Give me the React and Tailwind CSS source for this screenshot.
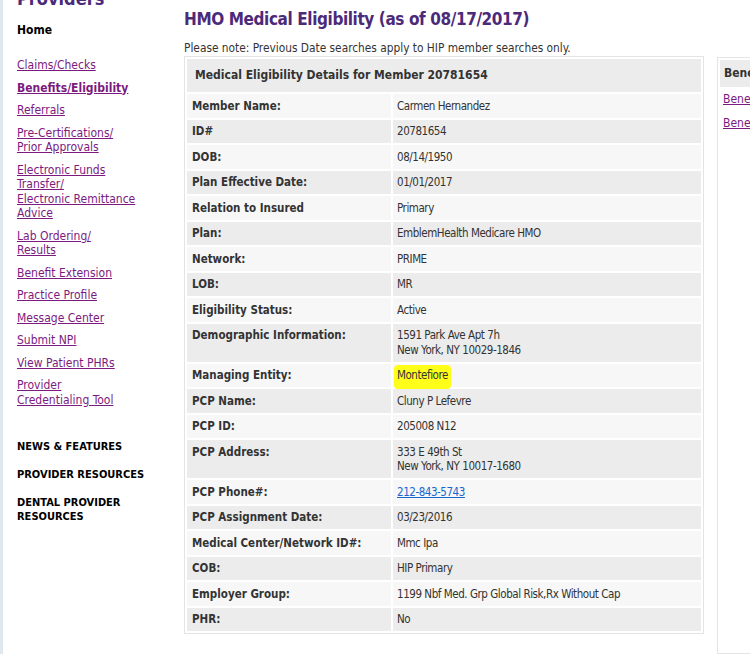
import React from 'react';

const rows = [
  ['Member Name:', ['Carmen Hernandez']],
  ['ID#', ['20781654']],
  ['DOB:', ['08/14/1950']],
  ['Plan Effective Date:', ['01/01/2017']],
  ['Relation to Insured', ['Primary']],
  ['Plan:', ['EmblemHealth Medicare HMO']],
  ['Network:', ['PRIME']],
  ['LOB:', ['MR']],
  ['Eligibility Status:', ['Active']],
  ['Demographic Information:', ['1591 Park Ave Apt 7h', 'New York, NY 10029-1846']],
  ['Managing Entity:', ['Montefiore'], 'highlight'],
  ['PCP Name:', ['Cluny P Lefevre']],
  ['PCP ID:', ['205008 N12']],
  ['PCP Address:', ['333 E 49th St', 'New York, NY 10017-1680']],
  ['PCP Phone#:', ['212-843-5743'], 'phone'],
  ['PCP Assignment Date:', ['03/23/2016']],
  ['Medical Center/Network ID#:', ['Mmc Ipa']],
  ['COB:', ['HIP Primary']],
  ['Employer Group:', ['1199 Nbf Med. Grp Global Risk,Rx Without Cap']],
  ['PHR:', ['No']],
];

const navLinks = [
  ['Claims/Checks'],
  ['Benefits/Eligibility', true],
  ['Referrals'],
  ['Pre-Certifications/\nPrior Approvals'],
  ['Electronic Funds\nTransfer/\nElectronic Remittance\nAdvice'],
  ['Lab Ordering/\nResults'],
  ['Benefit Extension'],
  ['Practice Profile'],
  ['Message Center'],
  ['Submit NPI'],
  ['View Patient PHRs'],
  ['Provider\nCredentialing Tool'],
];

const font = "font-['DejaVu_Sans_Condensed','Liberation_Sans',sans-serif]";

function Sidebar() {
  return (
    <div className="w-[181px] shrink-0 pl-[14px] pt-0">
      <div className="-mt-[12px] text-[18px] font-bold leading-[22px] text-[#4b2a7a]">Providers</div>
      <div className="mt-[13px] text-[12px] font-bold leading-[14px] text-black">Home</div>
      <ul className="mt-[21px] flex flex-col gap-[8px] text-[12px] leading-[14.5px]">
        {navLinks.map(([label, bold]) => (
          <li key={label}>
            <a href="#" className={`whitespace-pre-line text-[#7b1a7f] underline ${bold ? 'font-bold' : ''}`}>
              {label}
            </a>
          </li>
        ))}
      </ul>
      <div className="mt-[33px] flex flex-col gap-[14px] text-[11px] font-bold leading-[14px] text-black">
        <div>NEWS &amp; FEATURES</div>
        <div>PROVIDER RESOURCES</div>
        <div>
          DENTAL PROVIDER
          <br />
          RESOURCES
        </div>
      </div>
    </div>
  );
}

function DetailsTable() {
  return (
    <table className="w-[520px] border-separate border-spacing-[2px] border border-[#e4e4e4] bg-white text-[#333]">
      <thead>
        <tr>
          <th colSpan={2} className="bg-[#ececec] px-[8px] py-[9px] text-left text-[12px] font-bold leading-[15px]">
            Medical Eligibility Details for Member 20781654
          </th>
        </tr>
      </thead>
      <tbody>
        {rows.map(([label, value, kind], i) => (
          <tr key={label} className={i % 2 === 0 ? 'bg-[#f7f7f7]' : 'bg-[#ececec]'}>
            <td className="w-[204px] px-[5px] py-[4.5px] align-top text-[11.5px] font-bold leading-[14.5px]">{label}</td>
            <td className="px-[4px] py-[4.5px] align-top text-[11.5px] leading-[14.5px] tracking-[-0.45px]">
              {kind === 'phone' ? (
                <a href="#" className="text-[#1a66cc] underline">{value[0]}</a>
              ) : kind === 'highlight' ? (
                <span className="-mx-[3px] rounded-[4px] bg-[#ffff1a] px-[3px] pt-[3px] pb-[7px]">{value[0]}</span>
              ) : (
                value.map((line) => <div key={line}>{line}</div>)
              )}
            </td>
          </tr>
        ))}
      </tbody>
    </table>
  );
}

function SidePanel() {
  return (
    <div className="mt-[57px] w-[120px] shrink-0 border border-[#e4e4e4] bg-white pb-[10px]">
      <div className="m-[2px] bg-[#ececec] px-[4px] py-[6px] text-[12px] font-bold leading-[15px] text-[#333]">
        Benefits
      </div>
      <div className="flex flex-col gap-[9px] px-[5px] pt-[3px] text-[12px] leading-[14.5px]">
        <a href="#" className="text-[#7b1a7f] underline">Benefits Summary</a>
        <a href="#" className="text-[#7b1a7f] underline">Benefits Details</a>
      </div>
    </div>
  );
}

export default function App() {
  return (
    <div className={`flex h-[654px] w-[750px] overflow-hidden bg-white ${font}`}>
      <div className="w-[3px] shrink-0 bg-[#dfe7ef]" />
      <Sidebar />
      <div className="w-[520px] shrink-0">
        <h1 className="mt-[8px] text-[17px] font-bold leading-[22px] tracking-[-0.4px] text-[#4b2a7a]">
          HMO Medical Eligibility (as of 08/17/2017)
        </h1>
        <p className="mt-[11px] text-[11.8px] leading-[14px] text-[#333]">
          Please note: Previous Date searches apply to HIP member searches only.
        </p>
        <div className="mt-[1px]">
          <DetailsTable />
        </div>
      </div>
      <div className="w-[13px] shrink-0" />
      <SidePanel />
    </div>
  );
}
